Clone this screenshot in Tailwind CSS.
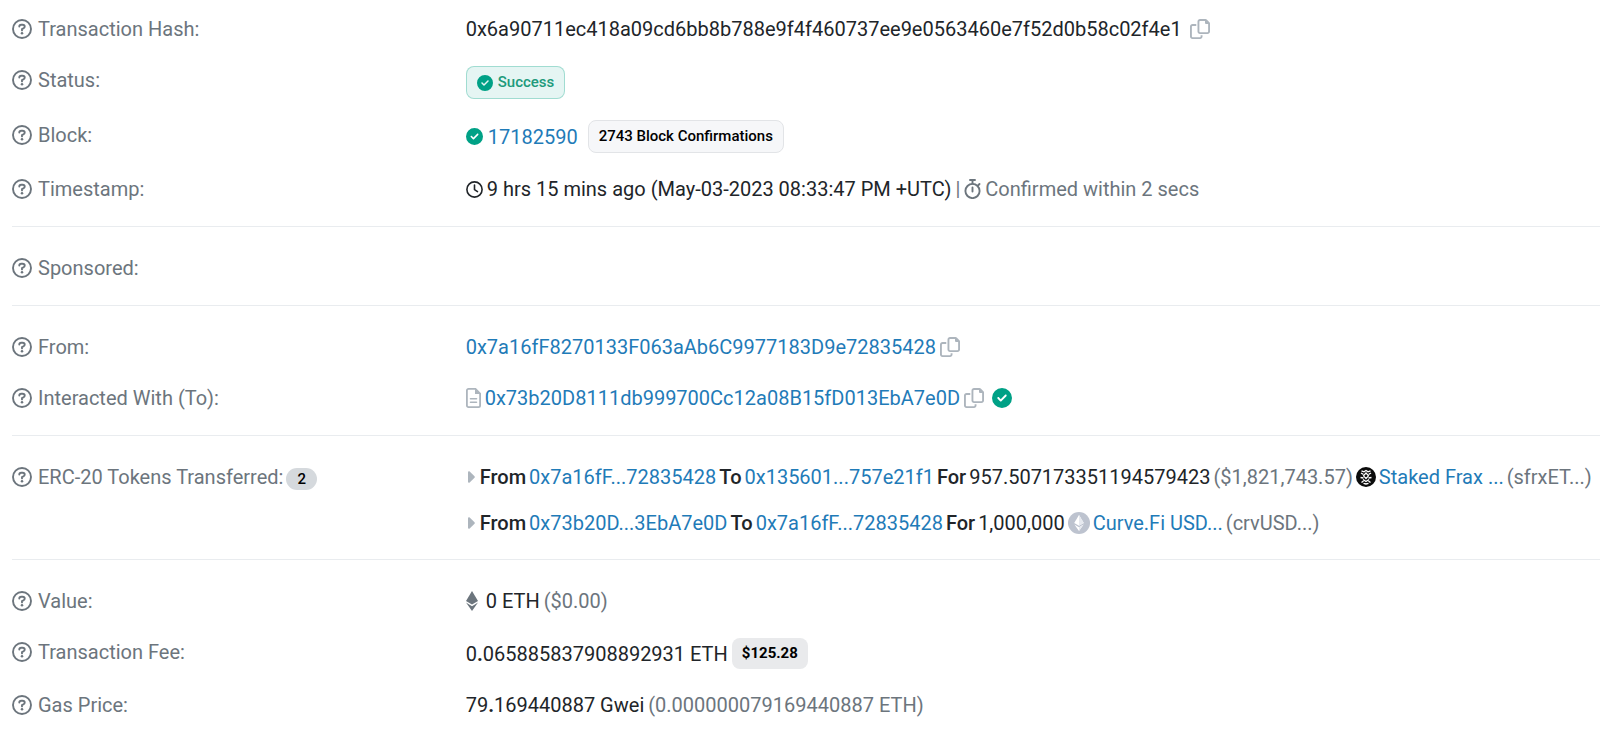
<!DOCTYPE html>
<html lang="en">
<head>
    <meta charset="UTF-8">
    <meta name="viewport" content="width=device-width, initial-scale=1.0">
    <title>Transaction Details</title>
    <script src="https://cdn.jsdelivr.net/npm/@tailwindcss/browser@4"></script>
</head>

<body class="bg-white font-['Roboto',sans-serif] text-[20px] leading-[30px] text-[#212529] overflow-x-hidden">
    <!-- Shared icons -->
    <svg class="hidden">
        <symbol id="icon-help" viewBox="0 0 20 20">
            <circle cx="10" cy="10" r="9" fill="none" stroke="currentColor" stroke-width="1.9"/>
            <path d="M7.3 7.6C7.3 6.4 8.2 5.7 9.3 5.7h1.3c1.2 0 2.1.8 2.1 1.9 0 .8-.4 1.3-1.1 1.7L10 10.2v1.2" fill="none" stroke="currentColor" stroke-width="1.9" stroke-linecap="round" stroke-linejoin="round"/>
            <circle cx="10" cy="14.2" r="1.25" fill="currentColor"/>
        </symbol>
        <symbol id="icon-check" viewBox="0 0 512 512">
            <path fill="currentColor" d="M256 512A256 256 0 1 0 256 0a256 256 0 1 0 0 512zM369 209L241 337c-9.4 9.4-24.6 9.4-33.9 0l-64-64c-9.4-9.4-9.4-24.6 0-33.900s24.6-9.4 33.9 0l47 47L335 175c9.4-9.4 24.6-9.4 33.9 0s9.4 24.6 0 33.900z"/>
        </symbol>
        <symbol id="icon-copy" viewBox="0 0 512 512">
            <path fill="currentColor" d="M272 0h124c12 0 24 5 33 14l69 69c9 9 14 21 14 33v204c0 35-29 64-64 64H256c-35 0-64-29-64-64V64c0-35 29-64 64-64zM240 64v256c0 9 7 16 16 16h192c9 0 16-7 16-16V128h-48c-18 0-32-14-32-32V48H256c-9 0-16 7-16 16zM64 128h96v48H64c-9 0-16 7-16 16v256c0 9 7 16 16 16h192c9 0 16-7 16-16v-32h48v32c0 35-29 64-64 64H64c-35 0-64-29-64-64V192c0-35 29-64 64-64z"/>
        </symbol>
        <symbol id="icon-caret" viewBox="0 0 7 12">
            <path fill="currentColor" d="M0 1.2C0 .2 1 0 1.7.6L6.5 5.2c.5.5.5 1.1 0 1.6L1.7 11.4C1 12 0 11.8 0 10.8z"/>
        </symbol>
    </svg>

    <main class="pl-3 pt-[14px]">
        <!-- Overview -->
        <section class="flex flex-col gap-[21px] border-b border-[#e9ecef] pb-[22px]">
            <div class="grid grid-cols-[minmax(0,2fr)_minmax(0,5fr)]">
                <div class="flex items-center gap-[6px] text-[#6c757d]"><svg class="size-5"><use href="#icon-help"/></svg>Transaction Hash:</div>
                <div class="flex items-center">
                    <span>0x6a90711ec418a09cd6bb8b788e9f4f460737ee9e0563460e7f52d0b58c02f4e1</span>
                    <button type="button" aria-label="Copy transaction hash" class="ml-2 text-[#adb5bd]"><svg class="size-5"><use href="#icon-copy"/></svg></button>
                </div>
            </div>
            <div class="grid grid-cols-[minmax(0,2fr)_minmax(0,5fr)] items-start">
                <div class="flex items-center gap-[6px] text-[#6c757d]"><svg class="size-5"><use href="#icon-help"/></svg>Status:</div>
                <div class="flex items-center pt-px">
                    <span class="flex items-center gap-[5px] rounded-lg border border-[#00a186]/30 bg-[#00a186]/10 px-[10px] py-[3px] text-[15px] leading-[25px] font-medium text-[#209a7b]"><svg class="size-4 text-[#00a186]"><use href="#icon-check"/></svg>Success</span>
                </div>
            </div>
            <div class="grid grid-cols-[minmax(0,2fr)_minmax(0,5fr)] items-start">
                <div class="flex items-center gap-[6px] text-[#6c757d]"><svg class="size-5"><use href="#icon-help"/></svg>Block:</div>
                <div class="flex items-center">
                    <svg class="size-[17px] text-[#00a186]"><use href="#icon-check"/></svg>
                    <a href="#" class="ml-[5px] text-[#1f7bb8]">17182590</a>
                    <span class="ml-[10px] rounded-lg border border-[#e2e4e7] bg-[#f6f7f9] px-[10px] py-[3px] text-[15px] leading-[25px] font-medium text-black">2743 Block Confirmations</span>
                </div>
            </div>
            <div class="grid grid-cols-[minmax(0,2fr)_minmax(0,5fr)]">
                <div class="flex items-center gap-[6px] text-[#6c757d]"><svg class="size-5"><use href="#icon-help"/></svg>Timestamp:</div>
                <div class="flex items-center gap-1">
                    <svg class="size-[17px]" viewBox="0 0 17 17" fill="none" stroke="currentColor" stroke-width="1.6" stroke-linecap="round" stroke-linejoin="round"><circle cx="8.5" cy="8.5" r="7.6"/><path d="M8.5 4v4.6l3 2"/></svg>
                    <span>9 hrs 15 mins ago (May-03-2023 08:33:47 PM +UTC)</span>
                    <span class="text-[#6c757d]">|</span>
                    <svg class="h-5 w-[17px] text-[#6c757d]" viewBox="0 0 17 20" fill="none" stroke="currentColor" stroke-width="1.9" stroke-linecap="round"><circle cx="8.5" cy="12" r="7.1"/><path d="M8.5 8.5v4M6 1h5M8.5 1v3.5M14 6.5l1.5-1.5"/></svg>
                    <span class="text-[#6c757d]">Confirmed within 2 secs</span>
                </div>
            </div>
        </section>

        <!-- Sponsored -->
        <section class="border-b border-[#e9ecef] pt-[26px] pb-[22px]">
            <div class="flex items-center gap-[6px] text-[#6c757d]"><svg class="size-5"><use href="#icon-help"/></svg>Sponsored:</div>
        </section>

        <!-- Addresses -->
        <section class="flex flex-col gap-[21px] border-b border-[#e9ecef] pt-[26px] pb-[22px]">
            <div class="grid grid-cols-[minmax(0,2fr)_minmax(0,5fr)]">
                <div class="flex items-center gap-[6px] text-[#6c757d]"><svg class="size-5"><use href="#icon-help"/></svg>From:</div>
                <div class="flex items-center">
                    <a href="#" class="text-[#1f7bb8]">0x7a16fF8270133F063aAb6C9977183D9e72835428</a>
                    <button type="button" aria-label="Copy sender address" class="ml-1 text-[#adb5bd]"><svg class="size-5"><use href="#icon-copy"/></svg></button>
                </div>
            </div>
            <div class="grid grid-cols-[minmax(0,2fr)_minmax(0,5fr)]">
                <div class="flex items-center gap-[6px] text-[#6c757d]"><svg class="size-5"><use href="#icon-help"/></svg>Interacted With (To):</div>
                <div class="flex items-center">
                    <svg class="h-5 w-[15px] text-[#adb5bd]" viewBox="0 0 15 20"><path d="M2.5.9h7l4.6 4.6v12a1.6 1.6 0 0 1-1.6 1.6h-10A1.6 1.6 0 0 1 .9 17.5v-15A1.6 1.6 0 0 1 2.5.9z" fill="none" stroke="currentColor" stroke-width="1.8"/><path d="M9 1v5h5z" fill="currentColor"/><path d="M4.5 10.7h6M4.5 14.3h6" stroke="currentColor" stroke-width="1.6" stroke-linecap="round"/></svg>
                    <a href="#" class="ml-1 text-[#1f7bb8]">0x73b20D8111db999700Cc12a08B15fD013EbA7e0D</a>
                    <button type="button" aria-label="Copy contract address" class="ml-1 text-[#adb5bd]"><svg class="size-5"><use href="#icon-copy"/></svg></button>
                    <svg class="ml-2 size-5 text-[#00a186]"><use href="#icon-check"/></svg>
                </div>
            </div>
        </section>

        <!-- Token transfers -->
        <section class="border-b border-[#e9ecef] pt-[26px] pb-[21px]">
            <div class="grid grid-cols-[minmax(0,2fr)_minmax(0,5fr)] items-start">
                <div class="flex h-[30px] items-center text-[#6c757d]"><svg class="mr-[6px] size-5"><use href="#icon-help"/></svg>ERC-20 Tokens Transferred:<span class="mt-1 ml-[3px] rounded-full bg-[#d5d9dd] px-[11px] text-[15px] leading-[22px] font-medium text-black">2</span></div>
                <div class="flex flex-col gap-4 whitespace-nowrap">
                    <div class="flex items-center gap-[3px]">
                        <svg class="mx-[2px] h-3 w-[7px] text-[#adb5bd]"><use href="#icon-caret"/></svg>
                        <span class="font-medium">From</span>
                        <a href="#" class="text-[#1f7bb8]">0x7a16fF...72835428</a>
                        <span class="font-medium">To</span>
                        <a href="#" class="text-[#1f7bb8]">0x135601...757e21f1</a>
                        <span class="font-medium">For</span>
                        <span>957.507173351194579423</span>
                        <span class="text-[#6c757d]">($1,821,743.57)</span>
                        <svg class="size-5" viewBox="0 0 20 20"><circle cx="10" cy="10" r="10" fill="#0b0b0b"/><path d="M5.5 3.8l2.5 1 2-1.300 2 1.300 2.500-1M5 6l2.500 1.500M15 6l-2.500 1.500M4.500 10.500l3 .5M15.500 10.500l-3 .5M5.500 15.500l2-1.500M14.500 15.500l-2-1.500M7 12.500l3 2 3-2M7.500 16.300l2.500.7 2.500-.7" fill="none" stroke="#fff" stroke-width="1.400"/><path d="M10 6l2.500 2.800L10 11.500 7.500 8.800z" fill="none" stroke="#fff" stroke-width="1.200"/></svg>
                        <a href="#" class="text-[#1f7bb8]">Staked Frax ...</a>
                        <span class="text-[#6c757d]">(sfrxET...)</span>
                    </div>
                    <div class="flex items-center gap-[3px]">
                        <svg class="mx-[2px] h-3 w-[7px] text-[#adb5bd]"><use href="#icon-caret"/></svg>
                        <span class="font-medium">From</span>
                        <a href="#" class="text-[#1f7bb8]">0x73b20D...3EbA7e0D</a>
                        <span class="font-medium">To</span>
                        <a href="#" class="text-[#1f7bb8]">0x7a16fF...72835428</a>
                        <span class="font-medium">For</span>
                        <span>1,000,000</span>
                        <svg class="size-[22px]" viewBox="0 0 22 22"><circle cx="11" cy="11" r="11" fill="#bdc3cf"/><path d="M11 3l4.800 8L11 13.800 6.200 11z" fill="#fff"/><path d="M11 15.200L6.400 12.500 11 19l4.600-6.500z" fill="#fff"/><path d="M11 3v10.800L15.800 11zM11 15.200V19l4.600-6.500z" fill="#e6e9ef"/></svg>
                        <a href="#" class="text-[#1f7bb8]">Curve.Fi USD...</a>
                        <span class="text-[#6c757d]">(crvUSD...)</span>
                    </div>
                </div>
            </div>
        </section>

        <!-- Value and fees -->
        <section class="flex flex-col gap-[21px] pt-[26px]">
            <div class="grid grid-cols-[minmax(0,2fr)_minmax(0,5fr)]">
                <div class="flex items-center gap-[6px] text-[#6c757d]"><svg class="size-5"><use href="#icon-help"/></svg>Value:</div>
                <div class="flex items-center gap-1">
                    <svg class="mr-1 h-5 w-3" viewBox="0 0 12 20"><path d="M6 0l6 10-6 3.600L0 10z" fill="#6c757d"/><path d="M6 15.200l6-3.700L6 20l-6-8.500z" fill="#6c757d"/></svg>
                    <span>0 ETH</span>
                    <span class="text-[#6c757d]">($0.00)</span>
                </div>
            </div>
            <div class="grid grid-cols-[minmax(0,2fr)_minmax(0,5fr)] items-start">
                <div class="flex items-center gap-[6px] text-[#6c757d]"><svg class="size-5"><use href="#icon-help"/></svg>Transaction Fee:</div>
                <div class="flex items-center gap-1 pt-px">
                    <span>0<b>.</b>065885837908892931 ETH</span>
                    <span class="rounded-lg bg-[#e9eaec] px-[10px] py-[3px] text-[15px] leading-[25px] font-bold text-black">$125.28</span>
                </div>
            </div>
            <div class="grid grid-cols-[minmax(0,2fr)_minmax(0,5fr)]">
                <div class="flex items-center gap-[6px] text-[#6c757d]"><svg class="size-5"><use href="#icon-help"/></svg>Gas Price:</div>
                <div class="flex items-center gap-1">
                    <span>79<b>.</b>169440887 Gwei</span>
                    <span class="text-[#6c757d]">(0.000000079169440887 ETH)</span>
                </div>
            </div>
        </section>
    </main>
</body>
</html>
